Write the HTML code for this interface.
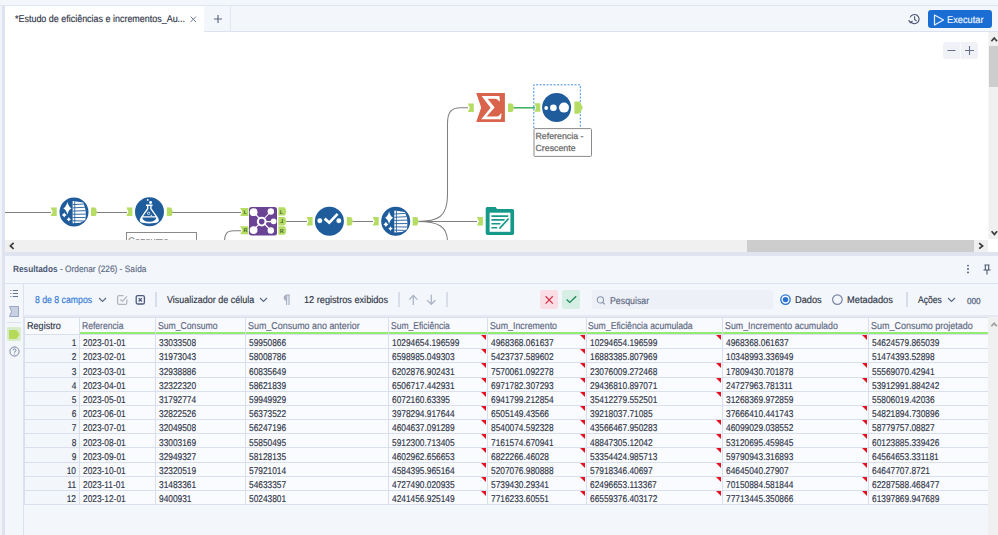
<!DOCTYPE html>
<html><head><meta charset="utf-8">
<style>
*{box-sizing:border-box;margin:0;padding:0}
html,body{width:998px;height:535px;overflow:hidden;background:#f3f7fb;font-family:"Liberation Sans",sans-serif;position:relative;text-rendering:geometricPrecision}
.a{position:absolute}
.t{position:absolute;white-space:nowrap;line-height:1;-webkit-text-stroke:0.15px currentColor}
</style></head><body>

<!-- top strip -->
<div class="a" style="left:0;top:0;width:998px;height:6px;background:#f3f7fb;border-bottom:1px solid #e0e6f1"></div>
<!-- tab bar -->
<div class="a" style="left:0;top:6px;width:998px;height:26px;background:#f3f7fb;border-bottom:1px solid #dce3ef"></div>
<div class="a" style="left:5px;top:6px;width:199px;height:26px;background:#fff"></div>
<svg class="a" style="left:189.5px;top:16px" width="7" height="7" viewBox="0 0 7 7"><path d="M0.6 0.6L6 6M6 0.6L0.6 6" stroke="#6a7690" stroke-width="1"/></svg>
<div class="a" style="left:204px;top:6px;width:27px;height:26px;border-right:1px solid #e2e6f0;border-bottom:1px solid #dce3ef;background:#f3f7fb"></div>
<svg class="a" style="left:213px;top:14px" width="10" height="10" viewBox="0 0 10 10"><path d="M5 1V9M1 5H9" stroke="#5a6783" stroke-width="1.15"/></svg>

<!-- history icon -->
<svg class="a" style="left:907px;top:12px" width="14" height="14" viewBox="0 0 14 14"><path d="M3.6 9.6A4.6 4.6 0 1 0 3.2 5.4" fill="none" stroke="#4a5670" stroke-width="1.15"/><path d="M1.6 8.2L3.4 10.6L5.6 8.9" fill="none" stroke="#4a5670" stroke-width="1.1"/><path d="M7.6 4.2V7.4L9.6 9.2" fill="none" stroke="#4a5670" stroke-width="1.1"/></svg>
<!-- Executar -->
<div class="a" style="left:928px;top:10px;width:64px;height:18px;background:#1a6ed3;border-radius:3px"></div>
<svg class="a" style="left:933px;top:14px" width="12" height="12" viewBox="0 0 12 12"><path d="M1.5 1L10.5 6L1.5 11Z" fill="none" stroke="#e8f0fb" stroke-width="1.2" stroke-linejoin="round"/></svg>

<!-- left lavender strip -->
<div class="a" style="left:2px;top:6px;width:3px;height:529px;background:#dfe3ef"></div>
<div class="a" style="left:0;top:6px;width:2px;height:529px;background:#f1f3f9"></div>

<!-- canvas -->
<div class="a" style="left:5px;top:32px;width:983px;height:208px;background:#fff;overflow:hidden" id="canvas"></div>

<!-- vertical scrollbar canvas -->
<div class="a" style="left:989px;top:32px;width:9px;height:207px;background:#f0f0f0"></div>
<div class="a" style="left:989px;top:46px;width:9px;height:41px;background:#cdcdcd"></div>
<svg class="a" style="left:989px;top:34px" width="9" height="10" viewBox="0 0 9 10"><path d="M2.4 7.2L5.2 4L8 7.2" fill="none" stroke="#3c3c3c" stroke-width="1.7"/></svg>
<svg class="a" style="left:989px;top:228px" width="9" height="10" viewBox="0 0 9 10"><path d="M2.6 3.2L5.4 6.4L8.2 3.2" fill="none" stroke="#3c3c3c" stroke-width="1.7"/></svg>

<!-- horizontal scrollbar -->
<div class="a" style="left:5px;top:240px;width:983px;height:12px;background:#f0f0f0"></div>
<div class="a" style="left:747px;top:240px;width:227px;height:12px;background:#cdcdcd"></div>
<div class="a" style="left:988px;top:239px;width:10px;height:13px;background:#fff"></div>
<svg class="a" style="left:6px;top:241px" width="10" height="10" viewBox="0 0 10 10"><path d="M7.6 1.9L4.4 4.9L7.6 7.8" fill="none" stroke="#3c3c3c" stroke-width="1.7"/></svg>
<svg class="a" style="left:976px;top:241px" width="10" height="10" viewBox="0 0 10 10"><path d="M3.2 2.2L6.6 5L3.2 7.7" fill="none" stroke="#3c3c3c" stroke-width="1.7"/></svg>

<!-- divider -->
<div class="a" style="left:5px;top:252px;width:993px;height:4px;background:#dfe4f0"></div>

<!-- results header -->
<div class="a" style="left:5px;top:256px;width:993px;height:28px;background:#f3f7fb;border-bottom:1px solid #dce3ef"></div>

<!-- kebab + pin -->
<svg class="a" style="left:966px;top:264px" width="4" height="10" viewBox="0 0 4 10"><circle cx="2" cy="1.6" r="0.9" fill="#4a5670"/><circle cx="2" cy="5" r="0.9" fill="#4a5670"/><circle cx="2" cy="8.4" r="0.9" fill="#4a5670"/></svg>
<svg class="a" style="left:982px;top:264px" width="10" height="11" viewBox="0 0 10 11"><path d="M2.5 1H7.5M3.3 1V5.5M6.7 1V5.5M1.5 6H8.5M5 6V10.5" fill="none" stroke="#4a5670" stroke-width="1.1"/></svg>

<!-- sidebar -->
<div class="a" style="left:5px;top:284px;width:19px;height:251px;background:#f3f7fb;border-right:1px solid #dce3ef"></div>
<svg class="a" style="left:9px;top:289px" width="10" height="9" viewBox="0 0 10 9"><path d="M1 1.5H2.6M1 4.5H2.6M1 7.5H2.6" stroke="#9aa4ba" stroke-width="1"/><path d="M3.8 1.5H9M3.8 4.5H9M3.8 7.5H9" stroke="#65728d" stroke-width="1"/></svg>
<svg class="a" style="left:9px;top:306px" width="10" height="11" viewBox="0 0 10 11"><path d="M0.5 0.5H9.5V10.5H0.5L2.5 5.5Z" fill="#c8d0e4" stroke="#8a97b4" stroke-width="0.8"/></svg>
<div class="a" style="left:7px;top:322px;width:14px;height:1px;background:#dce3ef"></div>
<div class="a" style="left:7px;top:327px;width:14px;height:14px;background:#d9ecc8;border-radius:2px"></div>
<svg class="a" style="left:9px;top:330px" width="11" height="9" viewBox="0 0 11 9"><path d="M0 0H7.5L10.5 4.5L7.5 9H0Z" fill="#b5d959"/></svg>
<svg class="a" style="left:9px;top:346px" width="11" height="11" viewBox="0 0 11 11"><circle cx="5.5" cy="5.5" r="4.6" fill="none" stroke="#6b7894" stroke-width="0.9"/><path d="M4 4.3A1.5 1.5 0 1 1 5.6 5.8V6.6" fill="none" stroke="#6b7894" stroke-width="0.9"/><circle cx="5.6" cy="8" r="0.55" fill="#6b7894"/></svg>

<!-- toolbar -->
<div class="a" style="left:24px;top:284px;width:974px;height:31px;background:#f3f7fb"></div>
<div class="a" style="left:24px;top:315px;width:974px;height:2px;background:#e6e9f2"></div>
<svg class="a" style="left:98px;top:297px" width="9" height="6" viewBox="0 0 9 6"><path d="M1 1L4.5 4.5L8 1" fill="none" stroke="#5d6a85" stroke-width="1.2"/></svg>
<svg class="a" style="left:116px;top:294px" width="13" height="12" viewBox="0 0 13 12"><path d="M7.5 1.6H3.1Q1.6 1.6 1.6 3.1V8.9Q1.6 10.4 3.1 10.4H9.3Q10.8 10.4 10.8 8.9V5.6" fill="none" stroke="#b3b5bb" stroke-width="1.3"/><path d="M4.4 5.6L6.4 7.4L11 2.4" fill="none" stroke="#b3b5bb" stroke-width="1.3"/></svg>
<svg class="a" style="left:135px;top:294px" width="11" height="12" viewBox="0 0 11 12"><rect x="1.2" y="1.6" width="8.2" height="8.4" rx="1.6" fill="none" stroke="#4b5a7e" stroke-width="1.3"/><path d="M3.6 4.1L6.9 7.5M6.9 4.1L3.6 7.5" stroke="#4b5a7e" stroke-width="1.3"/></svg>
<div class="a" style="left:155px;top:292px;width:1.5px;height:15px;background:#d8dde9"></div>
<svg class="a" style="left:259px;top:297px" width="9" height="6" viewBox="0 0 9 6"><path d="M1 1L4.5 4.5L8 1" fill="none" stroke="#5d6a85" stroke-width="1.2"/></svg>
<svg class="a" style="left:282px;top:294px" width="9" height="12" viewBox="0 0 9 12"><path d="M4.2 1.2H7.8M4.6 1.2V11M7 1.2V11" fill="none" stroke="#a9b1c2" stroke-width="1.2"/><path d="M4.6 1.2A2.5 2.5 0 0 0 4.6 6.4Z" fill="#a9b1c2" stroke="#a9b1c2" stroke-width="1"/></svg>
<div class="a" style="left:398px;top:292px;width:1.5px;height:15px;background:#d8dde9"></div>
<svg class="a" style="left:408px;top:294px" width="11" height="12" viewBox="0 0 11 12"><path d="M5.3 11V1.6M1.2 5.6L5.3 1.5L9.4 5.6" fill="none" stroke="#adb5c6" stroke-width="1.3"/></svg>
<svg class="a" style="left:426px;top:294px" width="11" height="12" viewBox="0 0 11 12"><path d="M5.3 0.8V10.2M1.2 6.2L5.3 10.3L9.4 6.2" fill="none" stroke="#adb5c6" stroke-width="1.3"/></svg>
<div class="a" style="left:446px;top:292px;width:1.5px;height:15px;background:#d8dde9"></div>
<div class="a" style="left:540px;top:290px;width:18px;height:19px;background:#f9dfe5;border-radius:2px"></div>
<svg class="a" style="left:544px;top:295px" width="10" height="10" viewBox="0 0 10 10"><path d="M1.6 1.2L8.8 8.6M8.8 1.2L1.6 8.6" stroke="#d7364f" stroke-width="1.3"/></svg>
<div class="a" style="left:562px;top:290px;width:18px;height:19px;background:#d7eee5;border-radius:2px"></div>
<svg class="a" style="left:566px;top:295px" width="11" height="9" viewBox="0 0 11 9"><path d="M0.6 4.4L3.8 7.4L10.2 1.2" fill="none" stroke="#1d8a5c" stroke-width="1.35"/></svg>
<div class="a" style="left:592px;top:290px;width:181px;height:19px;background:#edf0f7;border-radius:3px"></div>
<svg class="a" style="left:596px;top:296px" width="10" height="9" viewBox="0 0 10 9"><circle cx="4.4" cy="3.9" r="3.1" fill="none" stroke="#8a95ad" stroke-width="1.1"/><path d="M6.6 6.1L8.8 8.4" stroke="#8a95ad" stroke-width="1.2"/></svg>
<svg class="a" style="left:780px;top:294px" width="11" height="11" viewBox="0 0 11 11"><circle cx="5.5" cy="5.6" r="4.7" fill="none" stroke="#2b73d0" stroke-width="1.3"/><circle cx="5.5" cy="5.6" r="2.7" fill="#2b73d0"/></svg>
<svg class="a" style="left:832px;top:294px" width="11" height="11" viewBox="0 0 11 11"><circle cx="5.4" cy="5.6" r="4.8" fill="none" stroke="#7b88a6" stroke-width="1.2"/></svg>
<div class="a" style="left:906px;top:292px;width:1.5px;height:15px;background:#d8dde9"></div>
<svg class="a" style="left:947px;top:297px" width="9" height="6" viewBox="0 0 9 6"><path d="M1 1L4.5 4.5L8 1" fill="none" stroke="#5d6a85" stroke-width="1.2"/></svg>

<!-- table scrollbar -->
<div class="a" style="left:988px;top:317px;width:10px;height:218px;background:#f0f0f0"></div>
<svg class="a" style="left:989px;top:320px" width="9" height="9" viewBox="0 0 9 9"><path d="M2.4 6.2L5.1 3.2L7.8 6.2" fill="none" stroke="#9c9c9c" stroke-width="1.7"/></svg>

<!-- table -->
<div class="a" style="left:24px;top:317px;width:964px;height:188.00px;background:#d9dfec"></div>
<div class="a" style="left:25px;top:318px;width:54px;height:16px;background:#f9fafd"></div>
<div class="a" style="left:80px;top:318px;width:75px;height:16px;background:#f9fafd"></div>
<div class="a" style="left:80px;top:332px;width:75px;height:2px;background:#92ec72"></div>
<div class="a" style="left:156px;top:318px;width:89px;height:16px;background:#f9fafd"></div>
<div class="a" style="left:156px;top:332px;width:89px;height:2px;background:#92ec72"></div>
<div class="a" style="left:246px;top:318px;width:142px;height:16px;background:#f9fafd"></div>
<div class="a" style="left:246px;top:332px;width:142px;height:2px;background:#92ec72"></div>
<div class="a" style="left:389px;top:318px;width:98px;height:16px;background:#f9fafd"></div>
<div class="a" style="left:389px;top:332px;width:98px;height:2px;background:#92ec72"></div>
<div class="a" style="left:488px;top:318px;width:98px;height:16px;background:#f9fafd"></div>
<div class="a" style="left:488px;top:332px;width:98px;height:2px;background:#92ec72"></div>
<div class="a" style="left:587px;top:318px;width:135px;height:16px;background:#f9fafd"></div>
<div class="a" style="left:587px;top:332px;width:135px;height:2px;background:#92ec72"></div>
<div class="a" style="left:723px;top:318px;width:145px;height:16px;background:#f9fafd"></div>
<div class="a" style="left:723px;top:332px;width:145px;height:2px;background:#92ec72"></div>
<div class="a" style="left:869px;top:318px;width:119px;height:16px;background:#f9fafd"></div>
<div class="a" style="left:869px;top:332px;width:119px;height:2px;background:#92ec72"></div>
<div class="a" style="left:25px;top:335.00px;width:54px;height:13.18px;background:#f3f7fb"></div>
<div class="t" style="right:921.6px;top:339.30px;font-size:9.9px;color:#2f3547;transform:scaleX(0.845);transform-origin:100% 0">1</div>
<div class="a" style="left:80px;top:335.00px;width:75px;height:13.18px;background:#fafbfe"></div>
<div class="t" style="left:82.6px;top:339.30px;font-size:9.9px;color:#2f3547;transform:scaleX(0.845);transform-origin:0 0">2023-01-01</div>
<div class="a" style="left:156px;top:335.00px;width:89px;height:13.18px;background:#fafbfe"></div>
<div class="t" style="left:158.6px;top:339.30px;font-size:9.9px;color:#2f3547;transform:scaleX(0.845);transform-origin:0 0">33033508</div>
<div class="a" style="left:246px;top:335.00px;width:142px;height:13.18px;background:#fafbfe"></div>
<div class="t" style="left:248.6px;top:339.30px;font-size:9.9px;color:#2f3547;transform:scaleX(0.845);transform-origin:0 0">59950866</div>
<div class="a" style="left:389px;top:335.00px;width:98px;height:13.18px;background:#fafbfe"></div>
<div class="t" style="left:391.6px;top:339.30px;font-size:9.9px;color:#2f3547;transform:scaleX(0.845);transform-origin:0 0">10294654.196599</div>
<svg class="a" style="left:481px;top:335.00px" width="5" height="5"><path d="M0 0H5V5Z" fill="#e8101e"/></svg>
<div class="a" style="left:488px;top:335.00px;width:98px;height:13.18px;background:#fafbfe"></div>
<div class="t" style="left:490.6px;top:339.30px;font-size:9.9px;color:#2f3547;transform:scaleX(0.845);transform-origin:0 0">4968368.061637</div>
<svg class="a" style="left:580px;top:335.00px" width="5" height="5"><path d="M0 0H5V5Z" fill="#e8101e"/></svg>
<div class="a" style="left:587px;top:335.00px;width:135px;height:13.18px;background:#fafbfe"></div>
<div class="t" style="left:589.6px;top:339.30px;font-size:9.9px;color:#2f3547;transform:scaleX(0.845);transform-origin:0 0">10294654.196599</div>
<svg class="a" style="left:716px;top:335.00px" width="5" height="5"><path d="M0 0H5V5Z" fill="#e8101e"/></svg>
<div class="a" style="left:723px;top:335.00px;width:145px;height:13.18px;background:#fafbfe"></div>
<div class="t" style="left:725.6px;top:339.30px;font-size:9.9px;color:#2f3547;transform:scaleX(0.845);transform-origin:0 0">4968368.061637</div>
<svg class="a" style="left:862px;top:335.00px" width="5" height="5"><path d="M0 0H5V5Z" fill="#e8101e"/></svg>
<div class="a" style="left:869px;top:335.00px;width:119px;height:13.18px;background:#fafbfe"></div>
<div class="t" style="left:871.6px;top:339.30px;font-size:9.9px;color:#2f3547;transform:scaleX(0.845);transform-origin:0 0">54624579.865039</div>
<div class="a" style="left:25px;top:349.18px;width:54px;height:13.18px;background:#f3f7fb"></div>
<div class="t" style="right:921.6px;top:353.48px;font-size:9.9px;color:#2f3547;transform:scaleX(0.845);transform-origin:100% 0">2</div>
<div class="a" style="left:80px;top:349.18px;width:75px;height:13.18px;background:#fafbfe"></div>
<div class="t" style="left:82.6px;top:353.48px;font-size:9.9px;color:#2f3547;transform:scaleX(0.845);transform-origin:0 0">2023-02-01</div>
<div class="a" style="left:156px;top:349.18px;width:89px;height:13.18px;background:#fafbfe"></div>
<div class="t" style="left:158.6px;top:353.48px;font-size:9.9px;color:#2f3547;transform:scaleX(0.845);transform-origin:0 0">31973043</div>
<div class="a" style="left:246px;top:349.18px;width:142px;height:13.18px;background:#fafbfe"></div>
<div class="t" style="left:248.6px;top:353.48px;font-size:9.9px;color:#2f3547;transform:scaleX(0.845);transform-origin:0 0">58008786</div>
<div class="a" style="left:389px;top:349.18px;width:98px;height:13.18px;background:#fafbfe"></div>
<div class="t" style="left:391.6px;top:353.48px;font-size:9.9px;color:#2f3547;transform:scaleX(0.845);transform-origin:0 0">6598985.049303</div>
<svg class="a" style="left:481px;top:349.18px" width="5" height="5"><path d="M0 0H5V5Z" fill="#e8101e"/></svg>
<div class="a" style="left:488px;top:349.18px;width:98px;height:13.18px;background:#fafbfe"></div>
<div class="t" style="left:490.6px;top:353.48px;font-size:9.9px;color:#2f3547;transform:scaleX(0.845);transform-origin:0 0">5423737.589602</div>
<svg class="a" style="left:580px;top:349.18px" width="5" height="5"><path d="M0 0H5V5Z" fill="#e8101e"/></svg>
<div class="a" style="left:587px;top:349.18px;width:135px;height:13.18px;background:#fafbfe"></div>
<div class="t" style="left:589.6px;top:353.48px;font-size:9.9px;color:#2f3547;transform:scaleX(0.845);transform-origin:0 0">16883385.807969</div>
<div class="a" style="left:723px;top:349.18px;width:145px;height:13.18px;background:#fafbfe"></div>
<div class="t" style="left:725.6px;top:353.48px;font-size:9.9px;color:#2f3547;transform:scaleX(0.845);transform-origin:0 0">10348993.336949</div>
<div class="a" style="left:869px;top:349.18px;width:119px;height:13.18px;background:#fafbfe"></div>
<div class="t" style="left:871.6px;top:353.48px;font-size:9.9px;color:#2f3547;transform:scaleX(0.845);transform-origin:0 0">51474393.52898</div>
<div class="a" style="left:25px;top:363.37px;width:54px;height:13.18px;background:#f3f7fb"></div>
<div class="t" style="right:921.6px;top:367.67px;font-size:9.9px;color:#2f3547;transform:scaleX(0.845);transform-origin:100% 0">3</div>
<div class="a" style="left:80px;top:363.37px;width:75px;height:13.18px;background:#fafbfe"></div>
<div class="t" style="left:82.6px;top:367.67px;font-size:9.9px;color:#2f3547;transform:scaleX(0.845);transform-origin:0 0">2023-03-01</div>
<div class="a" style="left:156px;top:363.37px;width:89px;height:13.18px;background:#fafbfe"></div>
<div class="t" style="left:158.6px;top:367.67px;font-size:9.9px;color:#2f3547;transform:scaleX(0.845);transform-origin:0 0">32938886</div>
<div class="a" style="left:246px;top:363.37px;width:142px;height:13.18px;background:#fafbfe"></div>
<div class="t" style="left:248.6px;top:367.67px;font-size:9.9px;color:#2f3547;transform:scaleX(0.845);transform-origin:0 0">60835649</div>
<div class="a" style="left:389px;top:363.37px;width:98px;height:13.18px;background:#fafbfe"></div>
<div class="t" style="left:391.6px;top:367.67px;font-size:9.9px;color:#2f3547;transform:scaleX(0.845);transform-origin:0 0">6202876.902431</div>
<svg class="a" style="left:481px;top:363.37px" width="5" height="5"><path d="M0 0H5V5Z" fill="#e8101e"/></svg>
<div class="a" style="left:488px;top:363.37px;width:98px;height:13.18px;background:#fafbfe"></div>
<div class="t" style="left:490.6px;top:367.67px;font-size:9.9px;color:#2f3547;transform:scaleX(0.845);transform-origin:0 0">7570061.092278</div>
<svg class="a" style="left:580px;top:363.37px" width="5" height="5"><path d="M0 0H5V5Z" fill="#e8101e"/></svg>
<div class="a" style="left:587px;top:363.37px;width:135px;height:13.18px;background:#fafbfe"></div>
<div class="t" style="left:589.6px;top:367.67px;font-size:9.9px;color:#2f3547;transform:scaleX(0.845);transform-origin:0 0">23076009.272468</div>
<svg class="a" style="left:716px;top:363.37px" width="5" height="5"><path d="M0 0H5V5Z" fill="#e8101e"/></svg>
<div class="a" style="left:723px;top:363.37px;width:145px;height:13.18px;background:#fafbfe"></div>
<div class="t" style="left:725.6px;top:367.67px;font-size:9.9px;color:#2f3547;transform:scaleX(0.845);transform-origin:0 0">17809430.701878</div>
<svg class="a" style="left:862px;top:363.37px" width="5" height="5"><path d="M0 0H5V5Z" fill="#e8101e"/></svg>
<div class="a" style="left:869px;top:363.37px;width:119px;height:13.18px;background:#fafbfe"></div>
<div class="t" style="left:871.6px;top:367.67px;font-size:9.9px;color:#2f3547;transform:scaleX(0.845);transform-origin:0 0">55569070.42941</div>
<div class="a" style="left:25px;top:377.55px;width:54px;height:13.18px;background:#f3f7fb"></div>
<div class="t" style="right:921.6px;top:381.85px;font-size:9.9px;color:#2f3547;transform:scaleX(0.845);transform-origin:100% 0">4</div>
<div class="a" style="left:80px;top:377.55px;width:75px;height:13.18px;background:#fafbfe"></div>
<div class="t" style="left:82.6px;top:381.85px;font-size:9.9px;color:#2f3547;transform:scaleX(0.845);transform-origin:0 0">2023-04-01</div>
<div class="a" style="left:156px;top:377.55px;width:89px;height:13.18px;background:#fafbfe"></div>
<div class="t" style="left:158.6px;top:381.85px;font-size:9.9px;color:#2f3547;transform:scaleX(0.845);transform-origin:0 0">32322320</div>
<div class="a" style="left:246px;top:377.55px;width:142px;height:13.18px;background:#fafbfe"></div>
<div class="t" style="left:248.6px;top:381.85px;font-size:9.9px;color:#2f3547;transform:scaleX(0.845);transform-origin:0 0">58621839</div>
<div class="a" style="left:389px;top:377.55px;width:98px;height:13.18px;background:#fafbfe"></div>
<div class="t" style="left:391.6px;top:381.85px;font-size:9.9px;color:#2f3547;transform:scaleX(0.845);transform-origin:0 0">6506717.442931</div>
<svg class="a" style="left:481px;top:377.55px" width="5" height="5"><path d="M0 0H5V5Z" fill="#e8101e"/></svg>
<div class="a" style="left:488px;top:377.55px;width:98px;height:13.18px;background:#fafbfe"></div>
<div class="t" style="left:490.6px;top:381.85px;font-size:9.9px;color:#2f3547;transform:scaleX(0.845);transform-origin:0 0">6971782.307293</div>
<svg class="a" style="left:580px;top:377.55px" width="5" height="5"><path d="M0 0H5V5Z" fill="#e8101e"/></svg>
<div class="a" style="left:587px;top:377.55px;width:135px;height:13.18px;background:#fafbfe"></div>
<div class="t" style="left:589.6px;top:381.85px;font-size:9.9px;color:#2f3547;transform:scaleX(0.845);transform-origin:0 0">29436810.897071</div>
<svg class="a" style="left:716px;top:377.55px" width="5" height="5"><path d="M0 0H5V5Z" fill="#e8101e"/></svg>
<div class="a" style="left:723px;top:377.55px;width:145px;height:13.18px;background:#fafbfe"></div>
<div class="t" style="left:725.6px;top:381.85px;font-size:9.9px;color:#2f3547;transform:scaleX(0.845);transform-origin:0 0">24727963.781311</div>
<svg class="a" style="left:862px;top:377.55px" width="5" height="5"><path d="M0 0H5V5Z" fill="#e8101e"/></svg>
<div class="a" style="left:869px;top:377.55px;width:119px;height:13.18px;background:#fafbfe"></div>
<div class="t" style="left:871.6px;top:381.85px;font-size:9.9px;color:#2f3547;transform:scaleX(0.845);transform-origin:0 0">53912991.884242</div>
<div class="a" style="left:25px;top:391.73px;width:54px;height:13.18px;background:#f3f7fb"></div>
<div class="t" style="right:921.6px;top:396.03px;font-size:9.9px;color:#2f3547;transform:scaleX(0.845);transform-origin:100% 0">5</div>
<div class="a" style="left:80px;top:391.73px;width:75px;height:13.18px;background:#fafbfe"></div>
<div class="t" style="left:82.6px;top:396.03px;font-size:9.9px;color:#2f3547;transform:scaleX(0.845);transform-origin:0 0">2023-05-01</div>
<div class="a" style="left:156px;top:391.73px;width:89px;height:13.18px;background:#fafbfe"></div>
<div class="t" style="left:158.6px;top:396.03px;font-size:9.9px;color:#2f3547;transform:scaleX(0.845);transform-origin:0 0">31792774</div>
<div class="a" style="left:246px;top:391.73px;width:142px;height:13.18px;background:#fafbfe"></div>
<div class="t" style="left:248.6px;top:396.03px;font-size:9.9px;color:#2f3547;transform:scaleX(0.845);transform-origin:0 0">59949929</div>
<div class="a" style="left:389px;top:391.73px;width:98px;height:13.18px;background:#fafbfe"></div>
<div class="t" style="left:391.6px;top:396.03px;font-size:9.9px;color:#2f3547;transform:scaleX(0.845);transform-origin:0 0">6072160.63395</div>
<svg class="a" style="left:481px;top:391.73px" width="5" height="5"><path d="M0 0H5V5Z" fill="#e8101e"/></svg>
<div class="a" style="left:488px;top:391.73px;width:98px;height:13.18px;background:#fafbfe"></div>
<div class="t" style="left:490.6px;top:396.03px;font-size:9.9px;color:#2f3547;transform:scaleX(0.845);transform-origin:0 0">6941799.212854</div>
<svg class="a" style="left:580px;top:391.73px" width="5" height="5"><path d="M0 0H5V5Z" fill="#e8101e"/></svg>
<div class="a" style="left:587px;top:391.73px;width:135px;height:13.18px;background:#fafbfe"></div>
<div class="t" style="left:589.6px;top:396.03px;font-size:9.9px;color:#2f3547;transform:scaleX(0.845);transform-origin:0 0">35412279.552501</div>
<svg class="a" style="left:716px;top:391.73px" width="5" height="5"><path d="M0 0H5V5Z" fill="#e8101e"/></svg>
<div class="a" style="left:723px;top:391.73px;width:145px;height:13.18px;background:#fafbfe"></div>
<div class="t" style="left:725.6px;top:396.03px;font-size:9.9px;color:#2f3547;transform:scaleX(0.845);transform-origin:0 0">31268369.972859</div>
<div class="a" style="left:869px;top:391.73px;width:119px;height:13.18px;background:#fafbfe"></div>
<div class="t" style="left:871.6px;top:396.03px;font-size:9.9px;color:#2f3547;transform:scaleX(0.845);transform-origin:0 0">55806019.42036</div>
<div class="a" style="left:25px;top:405.92px;width:54px;height:13.18px;background:#f3f7fb"></div>
<div class="t" style="right:921.6px;top:410.22px;font-size:9.9px;color:#2f3547;transform:scaleX(0.845);transform-origin:100% 0">6</div>
<div class="a" style="left:80px;top:405.92px;width:75px;height:13.18px;background:#fafbfe"></div>
<div class="t" style="left:82.6px;top:410.22px;font-size:9.9px;color:#2f3547;transform:scaleX(0.845);transform-origin:0 0">2023-06-01</div>
<div class="a" style="left:156px;top:405.92px;width:89px;height:13.18px;background:#fafbfe"></div>
<div class="t" style="left:158.6px;top:410.22px;font-size:9.9px;color:#2f3547;transform:scaleX(0.845);transform-origin:0 0">32822526</div>
<div class="a" style="left:246px;top:405.92px;width:142px;height:13.18px;background:#fafbfe"></div>
<div class="t" style="left:248.6px;top:410.22px;font-size:9.9px;color:#2f3547;transform:scaleX(0.845);transform-origin:0 0">56373522</div>
<div class="a" style="left:389px;top:405.92px;width:98px;height:13.18px;background:#fafbfe"></div>
<div class="t" style="left:391.6px;top:410.22px;font-size:9.9px;color:#2f3547;transform:scaleX(0.845);transform-origin:0 0">3978294.917644</div>
<svg class="a" style="left:481px;top:405.92px" width="5" height="5"><path d="M0 0H5V5Z" fill="#e8101e"/></svg>
<div class="a" style="left:488px;top:405.92px;width:98px;height:13.18px;background:#fafbfe"></div>
<div class="t" style="left:490.6px;top:410.22px;font-size:9.9px;color:#2f3547;transform:scaleX(0.845);transform-origin:0 0">6505149.43566</div>
<svg class="a" style="left:580px;top:405.92px" width="5" height="5"><path d="M0 0H5V5Z" fill="#e8101e"/></svg>
<div class="a" style="left:587px;top:405.92px;width:135px;height:13.18px;background:#fafbfe"></div>
<div class="t" style="left:589.6px;top:410.22px;font-size:9.9px;color:#2f3547;transform:scaleX(0.845);transform-origin:0 0">39218037.71085</div>
<div class="a" style="left:723px;top:405.92px;width:145px;height:13.18px;background:#fafbfe"></div>
<div class="t" style="left:725.6px;top:410.22px;font-size:9.9px;color:#2f3547;transform:scaleX(0.845);transform-origin:0 0">37666410.441743</div>
<svg class="a" style="left:862px;top:405.92px" width="5" height="5"><path d="M0 0H5V5Z" fill="#e8101e"/></svg>
<div class="a" style="left:869px;top:405.92px;width:119px;height:13.18px;background:#fafbfe"></div>
<div class="t" style="left:871.6px;top:410.22px;font-size:9.9px;color:#2f3547;transform:scaleX(0.845);transform-origin:0 0">54821894.730896</div>
<div class="a" style="left:25px;top:420.10px;width:54px;height:13.18px;background:#f3f7fb"></div>
<div class="t" style="right:921.6px;top:424.40px;font-size:9.9px;color:#2f3547;transform:scaleX(0.845);transform-origin:100% 0">7</div>
<div class="a" style="left:80px;top:420.10px;width:75px;height:13.18px;background:#fafbfe"></div>
<div class="t" style="left:82.6px;top:424.40px;font-size:9.9px;color:#2f3547;transform:scaleX(0.845);transform-origin:0 0">2023-07-01</div>
<div class="a" style="left:156px;top:420.10px;width:89px;height:13.18px;background:#fafbfe"></div>
<div class="t" style="left:158.6px;top:424.40px;font-size:9.9px;color:#2f3547;transform:scaleX(0.845);transform-origin:0 0">32049508</div>
<div class="a" style="left:246px;top:420.10px;width:142px;height:13.18px;background:#fafbfe"></div>
<div class="t" style="left:248.6px;top:424.40px;font-size:9.9px;color:#2f3547;transform:scaleX(0.845);transform-origin:0 0">56247196</div>
<div class="a" style="left:389px;top:420.10px;width:98px;height:13.18px;background:#fafbfe"></div>
<div class="t" style="left:391.6px;top:424.40px;font-size:9.9px;color:#2f3547;transform:scaleX(0.845);transform-origin:0 0">4604637.091289</div>
<svg class="a" style="left:481px;top:420.10px" width="5" height="5"><path d="M0 0H5V5Z" fill="#e8101e"/></svg>
<div class="a" style="left:488px;top:420.10px;width:98px;height:13.18px;background:#fafbfe"></div>
<div class="t" style="left:490.6px;top:424.40px;font-size:9.9px;color:#2f3547;transform:scaleX(0.845);transform-origin:0 0">8540074.592328</div>
<svg class="a" style="left:580px;top:420.10px" width="5" height="5"><path d="M0 0H5V5Z" fill="#e8101e"/></svg>
<div class="a" style="left:587px;top:420.10px;width:135px;height:13.18px;background:#fafbfe"></div>
<div class="t" style="left:589.6px;top:424.40px;font-size:9.9px;color:#2f3547;transform:scaleX(0.845);transform-origin:0 0">43566467.950283</div>
<svg class="a" style="left:716px;top:420.10px" width="5" height="5"><path d="M0 0H5V5Z" fill="#e8101e"/></svg>
<div class="a" style="left:723px;top:420.10px;width:145px;height:13.18px;background:#fafbfe"></div>
<div class="t" style="left:725.6px;top:424.40px;font-size:9.9px;color:#2f3547;transform:scaleX(0.845);transform-origin:0 0">46099029.038552</div>
<svg class="a" style="left:862px;top:420.10px" width="5" height="5"><path d="M0 0H5V5Z" fill="#e8101e"/></svg>
<div class="a" style="left:869px;top:420.10px;width:119px;height:13.18px;background:#fafbfe"></div>
<div class="t" style="left:871.6px;top:424.40px;font-size:9.9px;color:#2f3547;transform:scaleX(0.845);transform-origin:0 0">58779757.08827</div>
<div class="a" style="left:25px;top:434.28px;width:54px;height:13.18px;background:#f3f7fb"></div>
<div class="t" style="right:921.6px;top:438.58px;font-size:9.9px;color:#2f3547;transform:scaleX(0.845);transform-origin:100% 0">8</div>
<div class="a" style="left:80px;top:434.28px;width:75px;height:13.18px;background:#fafbfe"></div>
<div class="t" style="left:82.6px;top:438.58px;font-size:9.9px;color:#2f3547;transform:scaleX(0.845);transform-origin:0 0">2023-08-01</div>
<div class="a" style="left:156px;top:434.28px;width:89px;height:13.18px;background:#fafbfe"></div>
<div class="t" style="left:158.6px;top:438.58px;font-size:9.9px;color:#2f3547;transform:scaleX(0.845);transform-origin:0 0">33003169</div>
<div class="a" style="left:246px;top:434.28px;width:142px;height:13.18px;background:#fafbfe"></div>
<div class="t" style="left:248.6px;top:438.58px;font-size:9.9px;color:#2f3547;transform:scaleX(0.845);transform-origin:0 0">55850495</div>
<div class="a" style="left:389px;top:434.28px;width:98px;height:13.18px;background:#fafbfe"></div>
<div class="t" style="left:391.6px;top:438.58px;font-size:9.9px;color:#2f3547;transform:scaleX(0.845);transform-origin:0 0">5912300.713405</div>
<svg class="a" style="left:481px;top:434.28px" width="5" height="5"><path d="M0 0H5V5Z" fill="#e8101e"/></svg>
<div class="a" style="left:488px;top:434.28px;width:98px;height:13.18px;background:#fafbfe"></div>
<div class="t" style="left:490.6px;top:438.58px;font-size:9.9px;color:#2f3547;transform:scaleX(0.845);transform-origin:0 0">7161574.670941</div>
<svg class="a" style="left:580px;top:434.28px" width="5" height="5"><path d="M0 0H5V5Z" fill="#e8101e"/></svg>
<div class="a" style="left:587px;top:434.28px;width:135px;height:13.18px;background:#fafbfe"></div>
<div class="t" style="left:589.6px;top:438.58px;font-size:9.9px;color:#2f3547;transform:scaleX(0.845);transform-origin:0 0">48847305.12042</div>
<svg class="a" style="left:716px;top:434.28px" width="5" height="5"><path d="M0 0H5V5Z" fill="#e8101e"/></svg>
<div class="a" style="left:723px;top:434.28px;width:145px;height:13.18px;background:#fafbfe"></div>
<div class="t" style="left:725.6px;top:438.58px;font-size:9.9px;color:#2f3547;transform:scaleX(0.845);transform-origin:0 0">53120695.459845</div>
<svg class="a" style="left:862px;top:434.28px" width="5" height="5"><path d="M0 0H5V5Z" fill="#e8101e"/></svg>
<div class="a" style="left:869px;top:434.28px;width:119px;height:13.18px;background:#fafbfe"></div>
<div class="t" style="left:871.6px;top:438.58px;font-size:9.9px;color:#2f3547;transform:scaleX(0.845);transform-origin:0 0">60123885.339426</div>
<div class="a" style="left:25px;top:448.47px;width:54px;height:13.18px;background:#f3f7fb"></div>
<div class="t" style="right:921.6px;top:452.77px;font-size:9.9px;color:#2f3547;transform:scaleX(0.845);transform-origin:100% 0">9</div>
<div class="a" style="left:80px;top:448.47px;width:75px;height:13.18px;background:#fafbfe"></div>
<div class="t" style="left:82.6px;top:452.77px;font-size:9.9px;color:#2f3547;transform:scaleX(0.845);transform-origin:0 0">2023-09-01</div>
<div class="a" style="left:156px;top:448.47px;width:89px;height:13.18px;background:#fafbfe"></div>
<div class="t" style="left:158.6px;top:452.77px;font-size:9.9px;color:#2f3547;transform:scaleX(0.845);transform-origin:0 0">32949327</div>
<div class="a" style="left:246px;top:448.47px;width:142px;height:13.18px;background:#fafbfe"></div>
<div class="t" style="left:248.6px;top:452.77px;font-size:9.9px;color:#2f3547;transform:scaleX(0.845);transform-origin:0 0">58128135</div>
<div class="a" style="left:389px;top:448.47px;width:98px;height:13.18px;background:#fafbfe"></div>
<div class="t" style="left:391.6px;top:452.77px;font-size:9.9px;color:#2f3547;transform:scaleX(0.845);transform-origin:0 0">4602962.656653</div>
<svg class="a" style="left:481px;top:448.47px" width="5" height="5"><path d="M0 0H5V5Z" fill="#e8101e"/></svg>
<div class="a" style="left:488px;top:448.47px;width:98px;height:13.18px;background:#fafbfe"></div>
<div class="t" style="left:490.6px;top:452.77px;font-size:9.9px;color:#2f3547;transform:scaleX(0.845);transform-origin:0 0">6822266.46028</div>
<svg class="a" style="left:580px;top:448.47px" width="5" height="5"><path d="M0 0H5V5Z" fill="#e8101e"/></svg>
<div class="a" style="left:587px;top:448.47px;width:135px;height:13.18px;background:#fafbfe"></div>
<div class="t" style="left:589.6px;top:452.77px;font-size:9.9px;color:#2f3547;transform:scaleX(0.845);transform-origin:0 0">53354424.985713</div>
<svg class="a" style="left:716px;top:448.47px" width="5" height="5"><path d="M0 0H5V5Z" fill="#e8101e"/></svg>
<div class="a" style="left:723px;top:448.47px;width:145px;height:13.18px;background:#fafbfe"></div>
<div class="t" style="left:725.6px;top:452.77px;font-size:9.9px;color:#2f3547;transform:scaleX(0.845);transform-origin:0 0">59790943.316893</div>
<svg class="a" style="left:862px;top:448.47px" width="5" height="5"><path d="M0 0H5V5Z" fill="#e8101e"/></svg>
<div class="a" style="left:869px;top:448.47px;width:119px;height:13.18px;background:#fafbfe"></div>
<div class="t" style="left:871.6px;top:452.77px;font-size:9.9px;color:#2f3547;transform:scaleX(0.845);transform-origin:0 0">64564653.331181</div>
<div class="a" style="left:25px;top:462.65px;width:54px;height:13.18px;background:#f3f7fb"></div>
<div class="t" style="right:921.6px;top:466.95px;font-size:9.9px;color:#2f3547;transform:scaleX(0.845);transform-origin:100% 0">10</div>
<div class="a" style="left:80px;top:462.65px;width:75px;height:13.18px;background:#fafbfe"></div>
<div class="t" style="left:82.6px;top:466.95px;font-size:9.9px;color:#2f3547;transform:scaleX(0.845);transform-origin:0 0">2023-10-01</div>
<div class="a" style="left:156px;top:462.65px;width:89px;height:13.18px;background:#fafbfe"></div>
<div class="t" style="left:158.6px;top:466.95px;font-size:9.9px;color:#2f3547;transform:scaleX(0.845);transform-origin:0 0">32320519</div>
<div class="a" style="left:246px;top:462.65px;width:142px;height:13.18px;background:#fafbfe"></div>
<div class="t" style="left:248.6px;top:466.95px;font-size:9.9px;color:#2f3547;transform:scaleX(0.845);transform-origin:0 0">57921014</div>
<div class="a" style="left:389px;top:462.65px;width:98px;height:13.18px;background:#fafbfe"></div>
<div class="t" style="left:391.6px;top:466.95px;font-size:9.9px;color:#2f3547;transform:scaleX(0.845);transform-origin:0 0">4584395.965164</div>
<svg class="a" style="left:481px;top:462.65px" width="5" height="5"><path d="M0 0H5V5Z" fill="#e8101e"/></svg>
<div class="a" style="left:488px;top:462.65px;width:98px;height:13.18px;background:#fafbfe"></div>
<div class="t" style="left:490.6px;top:466.95px;font-size:9.9px;color:#2f3547;transform:scaleX(0.845);transform-origin:0 0">5207076.980888</div>
<svg class="a" style="left:580px;top:462.65px" width="5" height="5"><path d="M0 0H5V5Z" fill="#e8101e"/></svg>
<div class="a" style="left:587px;top:462.65px;width:135px;height:13.18px;background:#fafbfe"></div>
<div class="t" style="left:589.6px;top:466.95px;font-size:9.9px;color:#2f3547;transform:scaleX(0.845);transform-origin:0 0">57918346.40697</div>
<svg class="a" style="left:716px;top:462.65px" width="5" height="5"><path d="M0 0H5V5Z" fill="#e8101e"/></svg>
<div class="a" style="left:723px;top:462.65px;width:145px;height:13.18px;background:#fafbfe"></div>
<div class="t" style="left:725.6px;top:466.95px;font-size:9.9px;color:#2f3547;transform:scaleX(0.845);transform-origin:0 0">64645040.27907</div>
<svg class="a" style="left:862px;top:462.65px" width="5" height="5"><path d="M0 0H5V5Z" fill="#e8101e"/></svg>
<div class="a" style="left:869px;top:462.65px;width:119px;height:13.18px;background:#fafbfe"></div>
<div class="t" style="left:871.6px;top:466.95px;font-size:9.9px;color:#2f3547;transform:scaleX(0.845);transform-origin:0 0">64647707.8721</div>
<div class="a" style="left:25px;top:476.83px;width:54px;height:13.18px;background:#f3f7fb"></div>
<div class="t" style="right:921.6px;top:481.13px;font-size:9.9px;color:#2f3547;transform:scaleX(0.845);transform-origin:100% 0">11</div>
<div class="a" style="left:80px;top:476.83px;width:75px;height:13.18px;background:#fafbfe"></div>
<div class="t" style="left:82.6px;top:481.13px;font-size:9.9px;color:#2f3547;transform:scaleX(0.845);transform-origin:0 0">2023-11-01</div>
<div class="a" style="left:156px;top:476.83px;width:89px;height:13.18px;background:#fafbfe"></div>
<div class="t" style="left:158.6px;top:481.13px;font-size:9.9px;color:#2f3547;transform:scaleX(0.845);transform-origin:0 0">31483361</div>
<div class="a" style="left:246px;top:476.83px;width:142px;height:13.18px;background:#fafbfe"></div>
<div class="t" style="left:248.6px;top:481.13px;font-size:9.9px;color:#2f3547;transform:scaleX(0.845);transform-origin:0 0">54633357</div>
<div class="a" style="left:389px;top:476.83px;width:98px;height:13.18px;background:#fafbfe"></div>
<div class="t" style="left:391.6px;top:481.13px;font-size:9.9px;color:#2f3547;transform:scaleX(0.845);transform-origin:0 0">4727490.020935</div>
<svg class="a" style="left:481px;top:476.83px" width="5" height="5"><path d="M0 0H5V5Z" fill="#e8101e"/></svg>
<div class="a" style="left:488px;top:476.83px;width:98px;height:13.18px;background:#fafbfe"></div>
<div class="t" style="left:490.6px;top:481.13px;font-size:9.9px;color:#2f3547;transform:scaleX(0.845);transform-origin:0 0">5739430.29341</div>
<svg class="a" style="left:580px;top:476.83px" width="5" height="5"><path d="M0 0H5V5Z" fill="#e8101e"/></svg>
<div class="a" style="left:587px;top:476.83px;width:135px;height:13.18px;background:#fafbfe"></div>
<div class="t" style="left:589.6px;top:481.13px;font-size:9.9px;color:#2f3547;transform:scaleX(0.845);transform-origin:0 0">62496653.113367</div>
<svg class="a" style="left:716px;top:476.83px" width="5" height="5"><path d="M0 0H5V5Z" fill="#e8101e"/></svg>
<div class="a" style="left:723px;top:476.83px;width:145px;height:13.18px;background:#fafbfe"></div>
<div class="t" style="left:725.6px;top:481.13px;font-size:9.9px;color:#2f3547;transform:scaleX(0.845);transform-origin:0 0">70150884.581844</div>
<svg class="a" style="left:862px;top:476.83px" width="5" height="5"><path d="M0 0H5V5Z" fill="#e8101e"/></svg>
<div class="a" style="left:869px;top:476.83px;width:119px;height:13.18px;background:#fafbfe"></div>
<div class="t" style="left:871.6px;top:481.13px;font-size:9.9px;color:#2f3547;transform:scaleX(0.845);transform-origin:0 0">62287588.468477</div>
<div class="a" style="left:25px;top:491.02px;width:54px;height:13.18px;background:#f3f7fb"></div>
<div class="t" style="right:921.6px;top:495.32px;font-size:9.9px;color:#2f3547;transform:scaleX(0.845);transform-origin:100% 0">12</div>
<div class="a" style="left:80px;top:491.02px;width:75px;height:13.18px;background:#fafbfe"></div>
<div class="t" style="left:82.6px;top:495.32px;font-size:9.9px;color:#2f3547;transform:scaleX(0.845);transform-origin:0 0">2023-12-01</div>
<div class="a" style="left:156px;top:491.02px;width:89px;height:13.18px;background:#fafbfe"></div>
<div class="t" style="left:158.6px;top:495.32px;font-size:9.9px;color:#2f3547;transform:scaleX(0.845);transform-origin:0 0">9400931</div>
<div class="a" style="left:246px;top:491.02px;width:142px;height:13.18px;background:#fafbfe"></div>
<div class="t" style="left:248.6px;top:495.32px;font-size:9.9px;color:#2f3547;transform:scaleX(0.845);transform-origin:0 0">50243801</div>
<div class="a" style="left:389px;top:491.02px;width:98px;height:13.18px;background:#fafbfe"></div>
<div class="t" style="left:391.6px;top:495.32px;font-size:9.9px;color:#2f3547;transform:scaleX(0.845);transform-origin:0 0">4241456.925149</div>
<svg class="a" style="left:481px;top:491.02px" width="5" height="5"><path d="M0 0H5V5Z" fill="#e8101e"/></svg>
<div class="a" style="left:488px;top:491.02px;width:98px;height:13.18px;background:#fafbfe"></div>
<div class="t" style="left:490.6px;top:495.32px;font-size:9.9px;color:#2f3547;transform:scaleX(0.845);transform-origin:0 0">7716233.60551</div>
<svg class="a" style="left:580px;top:491.02px" width="5" height="5"><path d="M0 0H5V5Z" fill="#e8101e"/></svg>
<div class="a" style="left:587px;top:491.02px;width:135px;height:13.18px;background:#fafbfe"></div>
<div class="t" style="left:589.6px;top:495.32px;font-size:9.9px;color:#2f3547;transform:scaleX(0.845);transform-origin:0 0">66559376.403172</div>
<svg class="a" style="left:716px;top:491.02px" width="5" height="5"><path d="M0 0H5V5Z" fill="#e8101e"/></svg>
<div class="a" style="left:723px;top:491.02px;width:145px;height:13.18px;background:#fafbfe"></div>
<div class="t" style="left:725.6px;top:495.32px;font-size:9.9px;color:#2f3547;transform:scaleX(0.845);transform-origin:0 0">77713445.350866</div>
<svg class="a" style="left:862px;top:491.02px" width="5" height="5"><path d="M0 0H5V5Z" fill="#e8101e"/></svg>
<div class="a" style="left:869px;top:491.02px;width:119px;height:13.18px;background:#fafbfe"></div>
<div class="t" style="left:871.6px;top:495.32px;font-size:9.9px;color:#2f3547;transform:scaleX(0.845);transform-origin:0 0">61397869.947689</div>
<!-- canvas content -->
<div class="a" style="left:5px;top:32px;width:983px;height:208px;overflow:hidden">
<svg width="983" height="208" viewBox="5 32 983 208" style="position:absolute;left:0;top:0">
<defs>
<path id="ain" d="M0 0H6V8.5H0L2 4.25Z" fill="#b5dc63"/>
<path id="aout" d="M0 0H3.8Q4.6 0 5.1 1.2L6 4.25L5.1 7.3Q4.6 8.5 3.8 8.5H0Z" fill="#b5dc63"/>
<path id="ainw" d="M0 0H8.2V8H0L2 4Z" fill="#b5dc63"/>
<path id="aoutw" d="M0 0H5.6Q6.6 0 7.1 1.2L7.9 4.2L7.1 7.2Q6.6 8.4 5.6 8.4H0Z" fill="#b5dc63"/>
<clipPath id="docclip"><path d="M72.5 201H83.5L86.2 203.5Q88.8 212 86.2 220.5L80.5 223.4H72.5Z"/></clipPath>
</defs>
<g fill="none" stroke="#7f7f7f" stroke-width="1.05">
<path d="M5 212.5H51"/>
<path d="M96 212.5H127"/>
<path d="M172 212.5H241"/>
<path d="M224.5 242C224.5 234 226.5 230.8 234 230.8H241"/>
<path d="M285 221.5H307"/>
<path d="M352 221.5H373"/>
<path d="M417 221.5H477"/>
<path d="M417 221.5C438 221.5 447.5 217 447.5 195V124C447.5 112 451 107.8 461 107.8H468"/>
<path d="M417 221.5C438 221.5 447.5 226 447.5 242"/>
</g>
<path d="M513 107.8H535" stroke="#3aae5c" stroke-width="1.5"/>

<!-- tool 1 data cleanse -->
<use href="#ain" x="50.7" y="207.6"/>
<circle cx="74" cy="211.9" r="14.5" fill="#1f5c9b"/>
<use href="#aout" x="91" y="207.6"/>
<g id="dc" transform="translate(74 211.9)">
<path d="M-6.6 -9.9Q-5.3 -4.9 -2.5 -3.6Q-5.3 -2.3 -6.6 2.7Q-7.9 -2.3 -10.7 -3.6Q-7.9 -4.9 -6.6 -9.9Z" fill="#fff"/>
<path d="M-9.8 0.5Q-9.1 2.4 -7.3 3.1Q-9.1 3.8 -9.8 5.7Q-10.5 3.8 -12.3 3.1Q-10.5 2.4 -9.8 0.5Z" fill="#fff"/>
<path d="M-5.2 5Q-4.55 6.65 -3 7.3Q-4.55 7.95 -5.2 9.6Q-5.85 7.95 -7.4 7.3Q-5.85 6.65 -5.2 5Z" fill="#fff"/>
<clipPath id="dcc"><path d="M-1.4 -10.8L9.2 -9.4Q13.2 -1 11.2 8L6.4 10.8L-1.4 11.3Z"/></clipPath>
<g clip-path="url(#dcc)">
<rect x="-2" y="-12" width="16" height="24" fill="#fff"/>
<g stroke="#1f5c9b" stroke-width="0.9">
<path d="M-2 -7.2L14 -8.2M-2 -4.0L14 -4.8M-2 -0.8L14 -1.3M-2 2.4L14 2.2M-2 5.6L14 5.7M-2 8.8L14 9.2"/>
<path d="M0.75 -12V12" stroke-width="0.8"/>
</g>
</g>
</g>

<!-- tool 2 formula -->
<use href="#ain" x="126.4" y="207.6"/>
<circle cx="149.5" cy="211.8" r="14.5" fill="#1f5c9b"/>
<use href="#aout" x="166.8" y="207.6"/>
<path d="M146 204.6H152.6V206.1H151.6V208.4L157.8 217.2Q160 220.8 157.6 222.3Q155.5 223.4 149.3 223.4Q143.1 223.4 141 222.3Q138.6 220.8 140.8 217.2L147 208.4V206.1H146Z" fill="#fff"/>
<path d="M148.4 206.1H150.2V208.9L155.5 216.3H143.1L148.4 208.9Z" fill="#1f5c9b"/>
<path d="M142.3 217.5H156.3Q156 221.6 149.3 221.7Q142.6 221.6 142.3 217.5Z" fill="#1f5c9b"/>
<circle cx="148.6" cy="213.3" r="1.2" fill="none" stroke="#fff" stroke-width="0.8"/>
<circle cx="151.3" cy="215.3" r="0.65" fill="#fff"/>
<circle cx="147.7" cy="199.9" r="0.95" fill="#fff"/>
<circle cx="150.6" cy="202.5" r="1.45" fill="#fff"/>

<!-- label Consumo -->
<rect x="126.5" y="232.5" width="70" height="20" fill="#fff" stroke="#8a8a8a" stroke-width="1"/>
<text x="128" y="244.2" font-family="Liberation Sans" font-size="9.5" fill="#777">Consumo</text>

<!-- join -->
<use href="#ainw" x="240.2" y="207.9"/>
<use href="#ainw" x="240.2" y="226.3"/>
<rect x="249" y="206.9" width="28" height="28.5" rx="2.5" fill="#6a4395"/>
<use href="#aoutw" x="278.4" y="207.2"/>
<use href="#aoutw" x="278.4" y="217"/>
<use href="#aoutw" x="278.4" y="226.3"/>
<g font-family="Liberation Sans" font-weight="bold" font-size="5.5" fill="#3d6330">
<text x="243.6" y="214">L</text><text x="243.4" y="232.4">R</text>
<text x="279.8" y="213.6">L</text><text x="280.3" y="223.4">J</text><text x="279.7" y="232.6">R</text>
</g>
<g stroke="#fff" stroke-width="1.1">
<path d="M253.6 212.2L270.8 230.5M270.8 211.5L253.6 230.1M261.7 221.6H273.6"/>
</g>
<circle cx="253.6" cy="212.2" r="3.9" fill="#fff"/>
<circle cx="253.6" cy="230.1" r="3.9" fill="#fff"/>
<circle cx="270.8" cy="211.5" r="3.2" fill="#fff"/>
<circle cx="270.8" cy="230.5" r="3.2" fill="#fff"/>
<circle cx="273.6" cy="221.3" r="2.9" fill="#fff"/>
<circle cx="261.7" cy="221.6" r="3.85" fill="#6a4395" stroke="#fff" stroke-width="2.1"/>

<!-- select -->
<use href="#ain" x="306.6" y="217"/>
<circle cx="329.4" cy="221.3" r="14.5" fill="#1f5c9b"/>
<use href="#aout" x="346.8" y="217"/>
<circle cx="319.8" cy="220.8" r="2.45" fill="#fff"/>
<circle cx="338.8" cy="220.8" r="2.45" fill="#fff"/>
<path d="M324.6 218.6L329.3 222.6L337.6 213.9" fill="none" stroke="#fff" stroke-width="2.7" stroke-linejoin="miter"/>

<!-- data cleanse 2 -->
<use href="#ain" x="372.7" y="217"/>
<circle cx="395.7" cy="221.3" r="14.5" fill="#1f5c9b"/>
<use href="#aout" x="412.6" y="217"/>
<use href="#dc" x="321.7" y="9.4"/>

<!-- browse -->
<use href="#ain" x="476.9" y="217"/>
<path d="M485.7 208.6Q485.7 207.1 487.2 207.1H495.6L497 208.9H512.4Q514.1 208.9 514.1 210.6V233.3Q514.1 235.1 512.4 235.1H487.4Q485.7 235.1 485.7 233.3Z" fill="#17998a"/>
<rect x="489.6" y="212.7" width="20.8" height="19.1" fill="#fff"/>
<g stroke="#17998a" stroke-width="1.6">
<path d="M491.4 216.1H508.2M491.4 219.9H504.6M491.4 223.8H500.4M491.4 227.7H497.2"/>
</g>
<path d="M508.6 218.6L499.2 228.8" stroke="#fff" stroke-width="3.2"/>
<path d="M508.6 218.6L499.4 228.6" stroke="#17998a" stroke-width="1.6"/>

<!-- summarize -->
<use href="#ain" x="467.8" y="103.5"/>
<path d="M476.2 93H504.9V121.9H476.2L481.2 107.4Z" fill="#d9644b"/>
<path d="M481.6 96H499.4L499.9 101.2H498.9Q498.1 98.7 495 98.7H487.6L494.6 107.6L486.6 116.4H496.6Q499.8 116.4 500.6 113.6H501.6L500.8 119.2H481.2L490.6 107.8Z" fill="#fff"/>
<use href="#aout" x="508" y="103.5"/>

<!-- sort -->
<path d="M533.8 128V84.8H580.3V128" fill="none" stroke="#3b8fe6" stroke-width="1" stroke-dasharray="2 1.5"/>
<use href="#ain" x="534.3" y="103.3"/>
<circle cx="556.6" cy="107.4" r="14.5" fill="#1f5c9b"/>
<circle cx="546.2" cy="108" r="1.9" fill="#fff"/>
<circle cx="553.4" cy="107.8" r="3.3" fill="#fff"/>
<circle cx="564" cy="107.6" r="5" fill="#fff"/>
<path d="M574.4 101.4H578.4Q579.6 101.4 580.4 102.8L582.8 107.5L580.4 112.3Q579.6 113.7 578.4 113.7H574.4Z" fill="#b5dc63"/>
<rect x="534" y="128.6" width="57.5" height="27.8" rx="1" fill="#fff" stroke="#8a8a8a" stroke-width="1"/>
<text x="535.5" y="138.7" font-family="Liberation Sans" font-size="8.8" fill="#6a6a6a" stroke="#6a6a6a" stroke-width="0.25">Referencia -</text>
<text x="535.5" y="150.6" font-family="Liberation Sans" font-size="8.8" fill="#6a6a6a" stroke="#6a6a6a" stroke-width="0.25">Crescente</text>

<!-- zoom buttons -->
<rect x="943" y="42" width="35" height="17" rx="3" fill="#f0f2f8"/>
<path d="M960.5 42V59" stroke="#fbfcfe" stroke-width="1"/>
<path d="M947.5 50.5H955.5M965 50.5H974M969.5 46V55" stroke="#65728d" stroke-width="1.1"/>
</svg>
</div>

<!-- texts -->
<div class="t" style="left:14.80px;top:15.30px;font-size:9.9px;font-weight:normal;color:#2f3547;transform:scaleX(0.9059);transform-origin:0 0;">*Estudo de eficiências e incrementos_Au...</div>
<div class="t" style="left:947.46px;top:16.00px;font-size:9.9px;font-weight:normal;color:#f2f6fd;transform:scaleX(0.9368);transform-origin:0 0;">Executar</div>
<div class="t" style="left:12.50px;top:265.00px;font-size:9.2px;font-weight:bold;color:#4d5873;transform:scaleX(0.9000);transform-origin:0 0;-webkit-text-stroke:0">Resultados</div>
<div class="t" style="left:60.10px;top:265.00px;font-size:9.2px;font-weight:normal;color:#5d6a85;transform:scaleX(0.9052);transform-origin:0 0;">- Ordenar (226) - Saída</div>
<div class="t" style="left:34.80px;top:296.00px;font-size:9.9px;font-weight:normal;color:#2f78d6;transform:scaleX(0.8815);transform-origin:0 0;">8 de 8 campos</div>
<div class="t" style="left:166.80px;top:296.00px;font-size:9.9px;font-weight:normal;color:#2f3547;transform:scaleX(0.9104);transform-origin:0 0;">Visualizador de célula</div>
<div class="t" style="left:304.27px;top:296.00px;font-size:9.9px;font-weight:normal;color:#2f3547;transform:scaleX(0.9278);transform-origin:0 0;">12 registros exibidos</div>
<div class="t" style="left:610.11px;top:296.50px;font-size:9.9px;font-weight:normal;color:#5b6680;transform:scaleX(0.8907);transform-origin:0 0;">Pesquisar</div>
<div class="t" style="left:794.66px;top:296.00px;font-size:9.9px;font-weight:normal;color:#2f3547;transform:scaleX(0.9370);transform-origin:0 0;">Dados</div>
<div class="t" style="left:846.96px;top:296.00px;font-size:9.9px;font-weight:normal;color:#2f3547;transform:scaleX(0.9396);transform-origin:0 0;">Metadados</div>
<div class="t" style="left:917.60px;top:296.00px;font-size:9.9px;font-weight:normal;color:#2f3547;transform:scaleX(0.8667);transform-origin:0 0;">Ações</div>
<div class="t" style="left:967.00px;top:297.00px;font-size:8.6px;font-weight:normal;color:#5d6a85;transform:scaleX(0.9500);transform-origin:0 0;-webkit-text-stroke:0.3px #5d6a85">000</div>
<div class="t" style="left:26.78px;top:322.00px;font-size:9.9px;font-weight:normal;color:#2f3547;transform:scaleX(0.9194);transform-origin:0 0;">Registro</div>
<div class="t" style="left:82.33px;top:322.00px;font-size:9.9px;font-weight:normal;color:#5b6680;transform:scaleX(0.8681);transform-origin:0 0;">Referencia</div>
<div class="t" style="left:158.13px;top:322.00px;font-size:9.9px;font-weight:normal;color:#5b6680;transform:scaleX(0.8746);transform-origin:0 0;">Sum_Consumo</div>
<div class="t" style="left:247.80px;top:322.00px;font-size:9.9px;font-weight:normal;color:#5b6680;transform:scaleX(0.9041);transform-origin:0 0;">Sum_Consumo ano anterior</div>
<div class="t" style="left:390.74px;top:322.00px;font-size:9.9px;font-weight:normal;color:#5b6680;transform:scaleX(0.8642);transform-origin:0 0;">Sum_Eficiência</div>
<div class="t" style="left:489.91px;top:322.00px;font-size:9.9px;font-weight:normal;color:#5b6680;transform:scaleX(0.8905);transform-origin:0 0;">Sum_Incremento</div>
<div class="t" style="left:588.42px;top:322.00px;font-size:9.9px;font-weight:normal;color:#5b6680;transform:scaleX(0.8788);transform-origin:0 0;">Sum_Eficiência acumulada</div>
<div class="t" style="left:725.41px;top:322.00px;font-size:9.9px;font-weight:normal;color:#5b6680;transform:scaleX(0.8936);transform-origin:0 0;">Sum_Incremento acumulado</div>
<div class="t" style="left:871.39px;top:322.00px;font-size:9.9px;font-weight:normal;color:#5b6680;transform:scaleX(0.9090);transform-origin:0 0;">Sum_Consumo projetado</div>

</body></html>
